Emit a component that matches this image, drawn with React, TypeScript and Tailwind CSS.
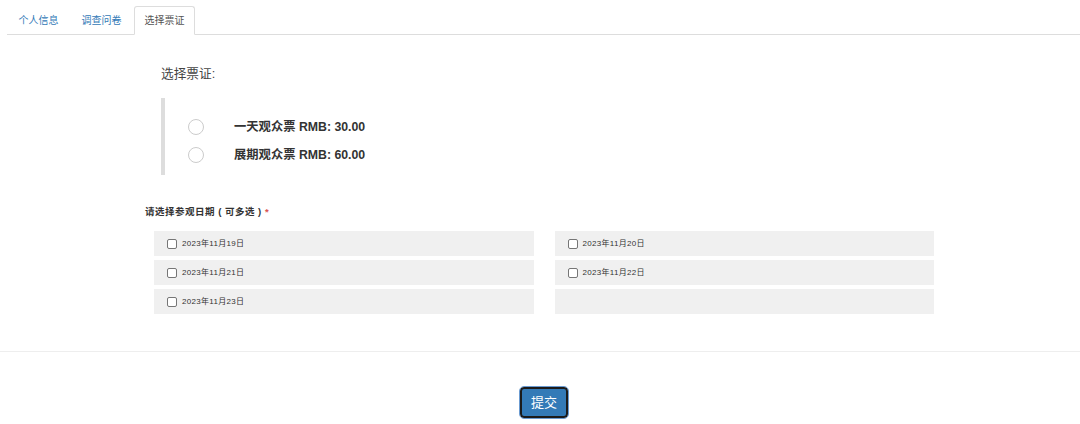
const dates = [
  '2023年11月19日',
  '2023年11月20日',
  '2023年11月21日',
  '2023年11月22日',
  '2023年11月23日',
  '',
];

const tickets = ['一天观众票 RMB: 30.00', '展期观众票 RMB: 60.00'];

export default function App() {
  return (
    <div
      className="w-[1080px] h-[424px] bg-white text-[#333] overflow-hidden"
      style={{ fontFamily: '"Liberation Sans", "Noto Sans CJK SC", sans-serif' }}
    >
      {/* tabs */}
      <div className="pt-[6px] pl-[7px]">
        <div className="flex border-b border-[#ddd] h-[29px]">
          <div className="w-[63px] flex items-center justify-center text-[10px] text-[#337ab7]">个人信息</div>
          <div className="w-[63px] flex items-center justify-center text-[10px] text-[#337ab7]">调查问卷</div>
          <div className="w-[61px] ml-[1px] -mb-px flex items-center justify-center text-[10px] text-[#555] bg-white border border-[#ddd] border-b-white rounded-t-[3px]">
            选择票证
          </div>
        </div>
      </div>

      {/* ticket select */}
      <div className="pl-[161px] pt-[30px]">
        <div className="text-[12.7px] text-[#444] leading-[18px]">选择票证:</div>
        <div className="mt-[15px] border-l-[4px] border-[#ddd] h-[77px] pl-[23px] pt-[21px] flex flex-col gap-[12px]">
          {tickets.map((t) => (
            <label key={t} className="flex items-center h-[16px]">
              <span className="w-[16px] h-[16px] rounded-full border border-[#ccc] bg-white" />
              <span className="ml-[30px] text-[12.3px] font-bold text-[#333]">{t}</span>
            </label>
          ))}
        </div>
      </div>

      {/* dates */}
      <div className="pl-[145px] pt-[31px]">
        <div className="text-[9.5px] font-bold text-[#333] leading-[12px] tracking-[0.5px]">
          请选择参观日期 ( 可多选 ) <span className="text-[#d9534f]">*</span>
        </div>
        <div className="mt-[13px] ml-[9px] w-[780px] grid grid-cols-2 gap-x-[21px] gap-y-[4px]">
          {dates.map((d, i) => (
            <div key={i} className="h-[25px] bg-[#f0f0f0] flex items-center pl-[13px]">
              {d && (
                <>
                  <span className="w-[10px] h-[10px] border border-[#767676] rounded-[2px] bg-white" />
                  <span className="ml-[5px] text-[8px] tracking-[0.3px] text-[#333]">{d}</span>
                </>
              )}
            </div>
          ))}
        </div>
      </div>

      <div className="mt-[37px] border-t border-[#eee]" />

      <div className="flex justify-center pt-[35px]">
        <button className="w-[48px] h-[31px] ml-[8px] rounded-[4px] bg-[#337ab7] border-2 border-[#1b1b1b] outline outline-1 outline-[#6b9bd1] text-white text-[13px]">
          提交
        </button>
      </div>
    </div>
  );
}
